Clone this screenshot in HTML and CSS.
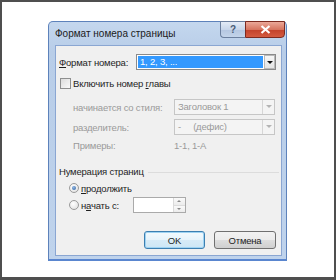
FILE: index.html
```html
<!DOCTYPE html>
<html lang="ru">
<head>
  <meta charset="UTF-8" />
  <title>Формат номера страницы</title>
  <link rel="stylesheet" href="styles.css">
</head>
<body>
  <div class="page">
    <div class="window">
      <div class="titlebar">
        <span class="title">Формат номера страницы</span>
        <div class="caption-buttons">
          <div class="help-btn">?</div>
          <div class="close-btn">
            <svg width="11" height="9" viewBox="0 0 11 9">
              <path d="M1.5 1 L9.5 8 M9.5 1 L1.5 8" stroke="#fff" stroke-width="2.2" />
            </svg>
          </div>
        </div>
      </div>

      <div class="client">
        <div class="row format-row">
          <span class="label"><u>Ф</u>ормат номера:</span>
          <div class="combo">
            <span class="selected">1, 2, 3, ...</span>
            <span class="arrow"></span>
          </div>
        </div>

        <div class="row check-row">
          <span class="checkbox"></span>
          <span>Включить номер <u>г</u>лавы</span>
        </div>

        <div class="row sub-row style-row">
          <span class="sub-label">начинается со стиля:</span>
          <div class="combo disabled">
            <span class="value">Заголовок 1</span>
            <span class="arrow"></span>
          </div>
        </div>

        <div class="row sub-row sep-row">
          <span class="sub-label">разделитель:</span>
          <div class="combo disabled">
            <span class="value">-&nbsp;&nbsp;&nbsp;&nbsp;&nbsp;(дефис)</span>
            <span class="arrow"></span>
          </div>
        </div>

        <div class="row sub-row example-row">
          <span class="sub-label">Примеры:</span>
          <span class="muted">1-1, 1-А</span>
        </div>

        <div class="row group-row">
          <span>Нумерация страниц</span>
          <span class="group-line"></span>
        </div>

        <div class="row radio-row first">
          <span class="radio checked"></span>
          <span><u>п</u>родолжить</span>
        </div>

        <div class="row radio-row second">
          <span class="radio"></span>
          <span class="start-label">н<u>а</u>чать с:</span>
          <div class="spin">
            <span class="spin-field"></span>
            <span class="spin-buttons">
              <span class="spin-up"></span>
              <span class="spin-down"></span>
            </span>
          </div>
        </div>

        <div class="row buttons">
          <button class="btn default">OK</button>
          <button class="btn">Отмена</button>
        </div>
      </div>
    </div>
  </div>
</body>
</html>
```
FILE: styles.css
```css
body {
  margin: 0;
  font-family: "Liberation Sans", Arial, sans-serif;
}
.page {
  width: 336px;
  height: 280px;
  box-sizing: border-box;
  border: 2px solid #4f4f4f;
  border-bottom-width: 3px;
  background: #fff;
  padding: 19px 0 0 46px;
}
.window {
  width: 239px;
  height: 240px;
  box-sizing: border-box;
  border: 1px solid #5d82bb;
  border-bottom: 2px solid #5a86cf;
  border-radius: 5px 5px 0 0;
  background: linear-gradient(#c4d7ee, #b8cde8 30px, #bfd3ec);
  padding: 0 4px 3px 6px;
  display: flex;
  flex-direction: column;
}
.titlebar {
  height: 23px;
  display: flex;
  align-items: flex-start;
}
.title {
  font-size: 10px;
  color: #1b1b1b;
  line-height: 23px;
}
.caption-buttons {
  margin-left: auto;
  margin-top: -1px;
  margin-right: -3px;
  display: flex;
}
.help-btn {
  width: 25px;
  height: 17px;
  box-sizing: border-box;
  border: 1px solid #6b7f9e;
  border-right: none;
  border-radius: 0 0 0 4px;
  background: linear-gradient(#e3ebf6, #c8d6ea 50%, #b4c6e0 51%, #c3d4ea);
  color: #4a5c76;
  font-size: 10px;
  font-weight: bold;
  text-align: center;
  line-height: 15px;
}
.close-btn {
  width: 40px;
  height: 17px;
  box-sizing: border-box;
  border: 1px solid #7c2a20;
  border-radius: 0 0 4px 0;
  background: linear-gradient(#eba898, #d77560 50%, #c2412a 51%, #d45a40);
  display: flex;
  align-items: center;
  justify-content: center;
}
.client {
  flex: 1;
  box-sizing: border-box;
  border: 1px solid #8aa6d2;
  background: #f0f0f0;
  padding: 8px 5px 0 3px;
  font-size: 9.5px;
  letter-spacing: -0.2px;
  color: #1e1e1e;
}
.row {
  display: flex;
  align-items: center;
}
.format-row {
  height: 16px;
}
.label {
  width: 77px;
}
.combo {
  flex: 1;
  height: 16px;
  box-sizing: border-box;
  border: 1px solid #8a8a8a;
  background: #fff;
  display: flex;
  align-items: stretch;
  padding: 1px 0 1px 1px;
}
.selected {
  flex: 1;
  background: #3399ff;
  color: #fff;
  line-height: 12px;
  padding-left: 2px;
  margin-right: 1px;
}
.arrow {
  width: 11px;
  box-sizing: border-box;
  border: 1px solid #b9b9b9;
  margin: -1px 0;
  background: linear-gradient(#f6f6f6, #e4e4e4);
  position: relative;
}
.arrow::after {
  content: "";
  position: absolute;
  left: 2px;
  top: 5px;
  border-left: 3px solid transparent;
  border-right: 3px solid transparent;
  border-top: 3px solid #111;
}
.check-row {
  margin-top: 8px;
  height: 11px;
  padding-left: 1px;
}
.checkbox {
  width: 11px;
  height: 11px;
  box-sizing: border-box;
  border: 1px solid #8e8f8f;
  background: linear-gradient(135deg, #dcdcdc, #fafafa);
  margin-right: 2px;
}
.sub-row {
  padding-left: 14px;
  color: #9a9a9a;
}
.sub-label {
  width: 101px;
}
.sub-row .combo {
  flex: none;
  width: 101px;
}
.style-row {
  margin-top: 10px;
}
.sep-row {
  margin-top: 4px;
}
.combo.disabled {
  border-color: #c6c6c6;
  background: #f4f4f4;
  padding: 0;
}
.value {
  flex: 1;
  line-height: 14px;
  padding-left: 3px;
}
.combo.disabled .arrow {
  margin: 0;
  border: none;
  border-left: 1px solid #d6d6d6;
  background: #f4f4f4;
  width: 12px;
}
.combo.disabled .arrow::after {
  left: 3px;
  top: 5px;
  border-top-color: #b4b4b4;
}
.muted {
  color: #9a9a9a;
}
.example-row {
  margin-top: 3px;
  height: 14px;
}
.group-row {
  margin-top: 12px;
  height: 14px;
}
.group-line {
  flex: 1;
  height: 1px;
  margin: 2px -3px 0 4px;
  background: #dcdcdc;
}
.radio-row {
  padding-left: 10px;
}
.radio-row.first {
  margin-top: 3px;
  height: 14px;
}
.radio-row.second {
  margin-top: 2px;
  height: 16px;
}
.radio {
  width: 10px;
  height: 10px;
  box-sizing: border-box;
  border-radius: 50%;
  border: 1px solid #9a9a9a;
  background: radial-gradient(circle at 40% 35%, #ffffff, #dcdcdc);
  margin-right: 2px;
  position: relative;
}
.radio.checked::after {
  content: "";
  position: absolute;
  left: 2px;
  top: 2px;
  width: 4px;
  height: 4px;
  border-radius: 50%;
  background: radial-gradient(circle at 40% 35%, #8fb6e4, #2b5d9c);
}
.start-label {
  width: 52px;
}
.spin {
  width: 53px;
  height: 16px;
  box-sizing: border-box;
  border: 1px solid #aaaaaa;
  background: #fff;
  display: flex;
}
.spin-field {
  flex: 1;
}
.spin-buttons {
  width: 11px;
  display: flex;
  flex-direction: column;
  border-left: 1px solid #dadada;
}
.spin-up,
.spin-down {
  flex: 1;
  position: relative;
  background: linear-gradient(#fafafa, #ececec);
}
.spin-up {
  border-bottom: 1px solid #dcdcdc;
}
.spin-up::after,
.spin-down::after {
  content: "";
  position: absolute;
  left: 3px;
  top: 2px;
  border-left: 2px solid transparent;
  border-right: 2px solid transparent;
}
.spin-up::after {
  border-bottom: 2px solid #8a8a8a;
}
.spin-down::after {
  border-top: 2px solid #8a8a8a;
}
.buttons {
  margin-top: 18px;
  justify-content: flex-end;
  gap: 9px;
}
.btn {
  height: 18px;
  width: 62px;
  box-sizing: border-box;
  border: 1px solid #707070;
  border-radius: 3px;
  background: linear-gradient(#f2f2f2, #ebebeb 50%, #dddddd 51%, #cfcfcf);
  font-family: "Liberation Sans", Arial, sans-serif;
  font-size: 9.5px;
  letter-spacing: -0.2px;
  color: #1e1e1e;
  padding: 0;
}
.btn.default {
  width: 61px;
  border-color: #3c7fb1;
  background: linear-gradient(#f4fafd, #e6f3fb 50%, #d7ebf7 51%, #cde6f5);
  box-shadow: inset 0 0 0 1px #9fd3f2;
}
```
